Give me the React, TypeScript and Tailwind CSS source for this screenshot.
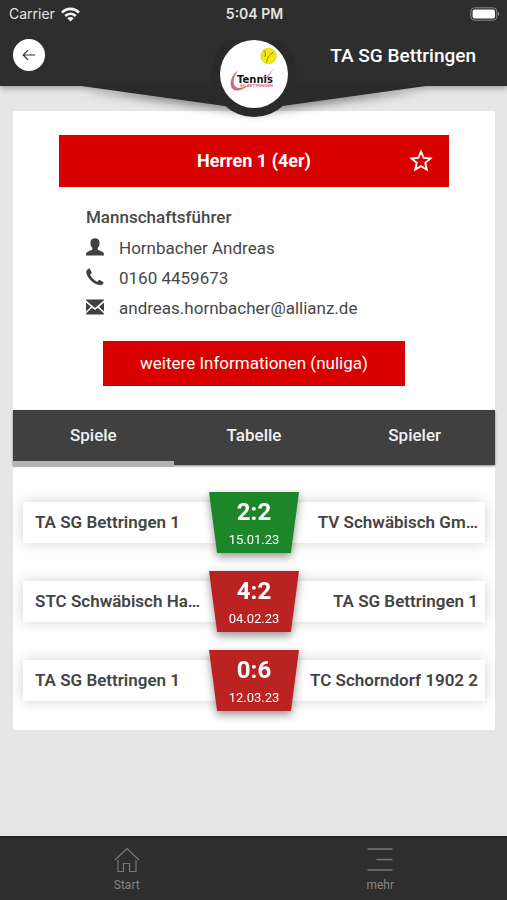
import { useState } from 'react';
import clsx from 'clsx';
import { MdStarBorder } from 'react-icons/md';

interface Match {
  home: string;
  guest: string;
  score: string;
  date: string;
  won: boolean;
}

// long club names arrive already shortened
const matches: Match[] = [
  { home: 'TA SG Bettringen 1', guest: 'TV Schwäbisch Gm…', score: '2:2', date: '15.01.23', won: true },
  { home: 'STC Schwäbisch Ha…', guest: 'TA SG Bettringen 1', score: '4:2', date: '04.02.23', won: false },
  { home: 'TA SG Bettringen 1', guest: 'TC Schorndorf 1902 2', score: '0:6', date: '12.03.23', won: false },
];

const tabs = ['Spiele', 'Tabelle', 'Spieler'];

function StatusBar() {
  return (
    <div className="grid h-7 grid-cols-3 items-center pr-[7px] pl-[9px] font-['Inter',sans-serif] text-sm text-[#e4e4e4]">
      <div className="flex items-center gap-1.5">
        <span>Carrier</span>
        <svg viewBox="0 0 18 14" className="h-[15px] w-[19px]" fill="none" stroke="#f4f4f4" strokeWidth="2.6">
          <path d="M1 5.2C5.6.6 12.4.6 17 5.2" />
          <path d="M4 8.4c3-2.8 7-2.8 10 0" />
          <path d="M9 13.6 5.9 10.6c1.8-1.5 4.4-1.5 6.2 0z" fill="#f4f4f4" stroke="none" />
        </svg>
      </div>
      <span className="text-center font-semibold">5:04 PM</span>
      <svg viewBox="0 0 30 14" className="h-3.5 w-[30px] justify-self-end">
        <rect x="0.8" y="0.8" width="26" height="12.4" rx="3.6" fill="none" stroke="#8a8a8a" />
        <rect x="2.6" y="2.6" width="22.4" height="8.8" rx="2" fill="#fff" />
        <path d="M28 5c1.600.3 1.600 3.700 0 4z" fill="#8a8a8a" />
      </svg>
    </div>
  );
}

function ClubLogo() {
  return (
    <svg viewBox="0 0 68 68" className="size-[68px]" role="img" aria-label="Tennis SG Bettringen">
      <circle cx="34" cy="34" r="34" fill="#fff" />
      <path d="M18.500 30.500C12 34 9 42 11.500 47.500c2.500 5 10 3.500 18-2.500-7 3-13 4.500-15 .5-1.800-4-.5-10.500 4-15z" fill="#d4687c" />
      <path d="m42 37.500 2-1.500 2.500 1 7.500-9-6.500 10z" fill="#dd7c8c" />
      <circle cx="48.500" cy="16" r="7.800" fill="#f5e80c" stroke="#d8c800" strokeWidth="0.600" />
      <path d="M44 10.500c2 1.500 1.500 4 .8 6.500M46.500 22.500c.5-4 2.500-7.500 7-10.500" fill="none" stroke="#8a8208" strokeWidth="1" />
      <text x="17" y="43" fontSize="10" fontWeight="700" fontFamily="DejaVu Sans, sans-serif" fill="#151515">
        Tennis
      </text>
      <text x="20" y="47" fontSize="4" fontWeight="700" fontFamily="Liberation Sans, sans-serif" fill="#dd5c6c">
        SG BETTRINGEN
      </text>
    </svg>
  );
}

function Header() {
  return (
    <header className="relative z-10 bg-[#2e2e2e] shadow-[0_2px_6px_rgba(0,0,0,0.35)]">
      <StatusBar />
      <div className="flex h-[58px] items-start justify-between pr-[31px] pl-[13px]">
        <button aria-label="Zurück" className="mt-[11px] flex size-8 items-center justify-center rounded-full bg-white">
          <svg viewBox="0 0 14 12" className="h-3 w-3.5" fill="none" stroke="#333" strokeWidth="1.2">
            <path d="M13 6H1.500M6 1.200 1.200 6 6 10.800" />
          </svg>
        </button>
        <h1 className="mt-3.5 text-[19px] leading-7 font-medium text-white">TA SG Bettringen</h1>
      </div>
      {/* wedge and club badge hang below the bar */}
      <div className="absolute inset-x-0 top-full flex justify-center drop-shadow-[0_4px_4px_rgba(0,0,0,0.4)]">
        <div className="h-6 w-[68%] bg-[#2a2a2a] [clip-path:polygon(0_0,100%_0,50%_100%)]" />
      </div>
      <div className="absolute top-[31px] left-1/2 -translate-x-1/2 rounded-full bg-[#2a2a2a] p-[9px] [clip-path:inset(9px_0_0_0)]">
        <ClubLogo />
      </div>
    </header>
  );
}

function UserIcon() {
  return (
    <svg viewBox="0 0 18 18" className="mb-0.5 size-[18px]" fill="#404040">
      <path d="M9 .3c3 0 4.600 1.700 4.600 4.700 0 2.200-.9 4-1.900 5v1.500c.3.900 5.500 2 6 3.500.3.800.3 1.500.2 2.500H.1c-.1-1-.1-1.700.2-2.500.5-1.500 5.700-2.600 6-3.500V10c-1-1-1.900-2.800-1.900-5C4.400 2 6 .3 9 .3z" />
    </svg>
  );
}

function PhoneIcon() {
  return (
    <svg viewBox="0 0 18 18" className="mb-0.5 size-[18px]" fill="#404040">
      <path d="M2.600.7c.5-.3 1-.2 1.300.3L5.700 4.200c.2.500.1.900-.3 1.200l-1 .7c-.4.300-.3.700-.1 1.200 1.500 2.700 3.600 4.800 6.300 6.300.5.200.9.200 1.200-.2l.8-1.100c.3-.4.700-.5 1.200-.3l3.400 1.900c.5.300.6.800.3 1.300-.9 1.500-2.400 2.200-4.200 1.900C7.300 16.200 1.300 10 .3 4.700 0 3 1 1.500 2.600.7z" />
    </svg>
  );
}

function MailIcon() {
  return (
    <svg viewBox="0 0 18 16" className="mb-0.5 h-4 w-[18px]" fill="#404040">
      <path d="M.2.500h17.600v.9L9 9 .2 1.400z" />
      <path d="M0 3.400 5 7.700 0 12.600zM18 3.400l-5 4.300 5 4.900zM.2 14.300l6-5.500L9 11.100l2.800-2.300 6 5.500v1.200H.2z" />
    </svg>
  );
}

function MatchRow({ match }: { match: Match }) {
  return (
    <li className="relative flex h-[61px] items-center">
      <div className="flex h-[41px] w-full items-center justify-between bg-white pr-[7px] pl-3 text-[17px] font-semibold text-[#444] shadow-[0_0_14px_rgba(0,0,0,0.18)]">
        <span className="whitespace-nowrap">{match.home}</span>
        <span className="text-right whitespace-nowrap">{match.guest}</span>
      </div>
      <div className="absolute inset-y-0 left-1/2 -translate-x-1/2 drop-shadow-[0_4px_4px_rgba(0,0,0,0.4)]">
        <div
          className={clsx(
            'flex h-full w-[90px] flex-col items-center pt-1.5 text-white [clip-path:polygon(0_0,100%_0,91%_100%,9%_100%)]',
            match.won ? 'bg-[#1d8628]' : 'bg-[#bb2222]',
          )}
        >
          <span className="text-2xl leading-7 font-bold">{match.score}</span>
          <span className="text-[13px] leading-7">{match.date}</span>
        </div>
      </div>
    </li>
  );
}

export default function App() {
  const [activeTab, setActiveTab] = useState('Spiele');

  return (
    <div className="flex min-h-screen flex-col bg-[#e6e6e6] font-[Roboto,sans-serif]">
      <Header />

      <main className="flex-1 pt-[25px] pr-3 pl-[13px]">
        <div className="bg-white pt-6 pb-[19px]">
          <div className="relative mx-[46px] flex h-[52px] items-center justify-center bg-[#d90000] text-white">
            <h2 className="text-lg font-bold">Herren 1 (4er)</h2>
            <button aria-label="Favorit" className="absolute right-3.5">
              <MdStarBorder className="size-7" />
            </button>
          </div>

          <div className="mt-[15px] px-[73px] text-[17px] leading-[30px] text-[#484848]">
            <h3 className="pb-px font-medium">Mannschaftsführer</h3>
            <div className="flex items-center gap-[15px]">
              <UserIcon />
              <span>Hornbacher Andreas</span>
            </div>
            <a href="tel:01604459673" className="flex items-center gap-[15px]">
              <PhoneIcon />
              <span>0160 4459673</span>
            </a>
            <a href="mailto:andreas.hornbacher@allianz.de" className="flex items-center gap-[15px]">
              <MailIcon />
              <span>andreas.hornbacher@allianz.de</span>
            </a>
          </div>

          <div className="mt-[18px] px-[90px]">
            <button className="h-[45px] w-full bg-[#d90000] text-[17px] text-white">weitere Informationen (nuliga)</button>
          </div>

          <div role="tablist" className="mt-6 grid h-[55px] grid-cols-3 bg-[#404040] shadow-[0_1px_2px_rgba(0,0,0,0.5)]">
            {tabs.map((tab) => (
              <button
                key={tab}
                role="tab"
                aria-selected={tab === activeTab}
                onClick={() => setActiveTab(tab)}
                className={clsx(
                  'h-[57px] border-b-6 text-[17px] font-medium text-[#f0f0f0]',
                  tab === activeTab ? 'border-[#b3b3b3]' : 'border-transparent',
                )}
              >
                {tab}
              </button>
            ))}
          </div>

          <ul className="mt-[27px] flex flex-col gap-[18px] px-2.5">
            {matches.map((match) => (
              <MatchRow key={match.date} match={match} />
            ))}
          </ul>
        </div>
      </main>

      <nav className="grid h-16 grid-cols-2 border-t-2 border-[#222] bg-[#2e2e2e] text-xs text-[#858585]">
        <a href="#start" className="flex flex-col items-center gap-1 pt-[9px]">
          <svg viewBox="0 0 26 26" className="size-[26px]" fill="none" stroke="#777" strokeWidth="1.2">
            <path d="M1 13 13 1.500 25 13" />
            <path d="M4 13v11.500h5.500V16.500h6v8H22V13" />
          </svg>
          Start
        </a>
        <a href="#mehr" className="flex flex-col items-center gap-1 pt-[9px]">
          <svg viewBox="0 0 26 26" className="size-[26px]" fill="none" stroke="#777" strokeWidth="1.4">
            <path d="M.5 2h25M9.500 12.500h16M.5 23h25" />
          </svg>
          mehr
        </a>
      </nav>
    </div>
  );
}
